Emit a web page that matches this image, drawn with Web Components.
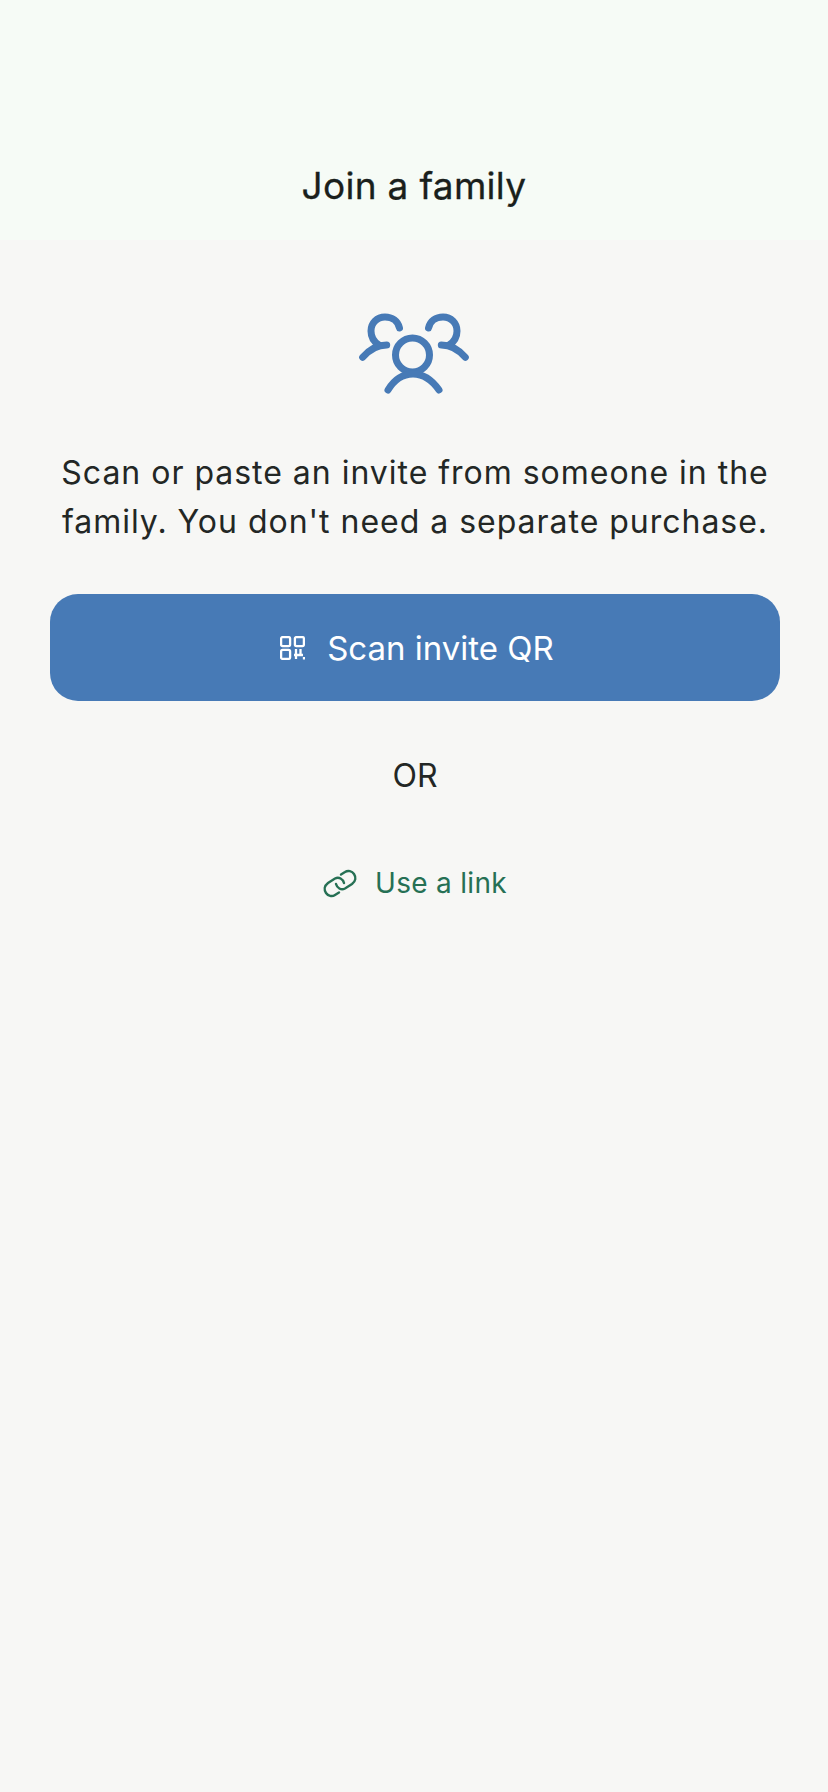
<!DOCTYPE html>
<html>
<head>
<meta charset="utf-8">
<style>
html, body { margin: 0; height: 100%; background: #f7f7f5; }
body { font-family: "Inter", "Liberation Sans", sans-serif; color: #1e2220; }
</style>
</head>
<body>
<join-screen>
  <app-bar slot="bar">Join a family</app-bar>
  <family-icon></family-icon>
  <intro-text>Scan or paste an invite from someone in the family. You don't need a separate purchase.</intro-text>
  <scan-button>Scan invite QR</scan-button>
  <or-label>OR</or-label>
  <link-button>Use a link</link-button>
</join-screen>
<script>
function ensure(name, ctor) {
  if (!customElements.get(name)) {
    customElements.define(name, ctor);
  }
}

class JoinScreen extends HTMLElement {
  constructor() {
    super();
    const root = this.attachShadow({ mode: "open" });
    root.innerHTML = `
      <style>
        :host { display: block; min-height: 1792px; box-sizing: border-box; }
        .body {
          display: flex;
          flex-direction: column;
          align-items: stretch;
          padding: 0 48px 0 50px;
        }
      </style>
      <slot name="bar"></slot>
      <div class="body"><slot></slot></div>
    `;
  }
}

class AppBar extends HTMLElement {
  constructor() {
    super();
    const root = this.attachShadow({ mode: "open" });
    root.innerHTML = `
      <style>
        :host {
          display: flex;
          align-items: flex-end;
          justify-content: center;
          box-sizing: border-box;
          height: 240px;
          padding-bottom: 29px;
          background: #f6fbf6;
          color: #1a1f1c;
          font-size: 37px;
          line-height: 50px;
          font-weight: 400;
          letter-spacing: 0.3px;
          -webkit-text-stroke: 0.3px #1a1f1c;
        }
      </style>
      <slot></slot>
    `;
  }
}

class FamilyIcon extends HTMLElement {
  constructor() {
    super();
    const root = this.attachShadow({ mode: "open" });
    root.innerHTML = `
      <style>
        :host { display: flex; justify-content: center; padding-top: 50px; }
        svg { display: block; }
      </style>
      <svg width="150" height="120" viewBox="0 0 150 120" fill="none" stroke="#477ab6" stroke-width="7" stroke-linecap="round" stroke-linejoin="round">
        <circle cx="72.5" cy="65" r="17"/>
        <path d="M48 100C54 90 62 84 73 84C83 84 92 90 99 100"/>
        <path d="M59.5 38C58 31 52 27 45 27C37 27 31 33 31 41C31 47 34 52 39 55"/>
        <path d="M46.7 55C37 55 29 60 22.7 67.3"/>
        <path d="M88.5 38C90 31 96 27 103 27C111 27 117 33 117 41C117 47 114 52 109 55"/>
        <path d="M101.3 55C111 55 119 60 125.3 67.3"/>
      </svg>
    `;
  }
}

class IntroText extends HTMLElement {
  constructor() {
    super();
    const root = this.attachShadow({ mode: "open" });
    root.innerHTML = `
      <style>
        :host {
          display: block;
          margin-top: 38px;
          text-align: center;
          font-size: 32px;
          line-height: 49px;
          letter-spacing: 0.98px;
          color: #232725;
        }
      </style>
      <slot></slot>
    `;
  }
}

class ScanButton extends HTMLElement {
  constructor() {
    super();
    const root = this.attachShadow({ mode: "open" });
    root.innerHTML = `
      <style>
        :host {
          display: flex;
          align-items: center;
          justify-content: center;
          gap: 22px;
          box-sizing: border-box;
          height: 107px;
          margin-top: 48px;
          padding-left: 4px;
          border-radius: 28px;
          background: #477ab6;
          color: #fff;
          font-size: 33px;
        }
        svg { display: block; }
      </style>
      <svg width="25" height="24" viewBox="0 0 25 24" fill="none" stroke="#fff" stroke-width="2.3">
        <rect x="1.1" y="1.1" width="9" height="9" rx="1.5"/>
        <rect x="14.9" y="1.1" width="9" height="9" rx="1.5"/>
        <rect x="1.1" y="13.9" width="9" height="9" rx="1.5"/>
        <path d="M16 13v10M14 19h9M20.5 13v6M24 21v2.5"/>
      </svg>
      <slot></slot>
    `;
  }
}

class OrLabel extends HTMLElement {
  constructor() {
    super();
    const root = this.attachShadow({ mode: "open" });
    root.innerHTML = `
      <style>
        :host {
          display: block;
          margin-top: 55px;
          text-align: center;
          font-size: 32px;
          line-height: 40px;
          color: #232725;
        }
      </style>
      <slot></slot>
    `;
  }
}

class LinkButton extends HTMLElement {
  constructor() {
    super();
    const root = this.attachShadow({ mode: "open" });
    root.innerHTML = `
      <style>
        :host {
          display: flex;
          align-items: center;
          justify-content: center;
          gap: 18px;
          margin-top: 69px;
          font-size: 28px;
          line-height: 36px;
          letter-spacing: 0.3px;
          color: #267054;
        }
        svg { display: block; }
      </style>
      <svg width="34" height="29" viewBox="0 0 34 29" fill="none" stroke="#267054" stroke-width="2.4" stroke-linecap="round">
        <path d="M21 14C20 10 16 7.5 12 9.5L5 14C1 17 1 21 3 24C5 27 9 28 12 26L16 23.5"/>
        <path d="M13 15C14 19 18 21.5 22 19.5L29 15C33 12 33 8 31 5C29 2 25 1 22 3L18 5.5"/>
      </svg>
      <slot></slot>
    `;
  }
}

ensure("join-screen", JoinScreen);
ensure("app-bar", AppBar);
ensure("family-icon", FamilyIcon);
ensure("intro-text", IntroText);
ensure("scan-button", ScanButton);
ensure("or-label", OrLabel);
ensure("link-button", LinkButton);
</script>
</body>
</html>
